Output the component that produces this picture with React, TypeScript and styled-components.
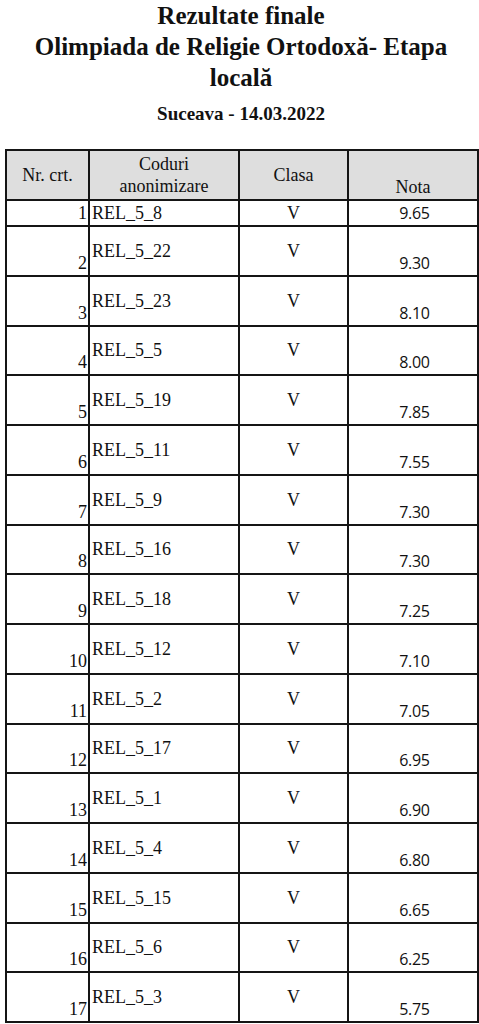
import * as React from 'react';
import styled, { createGlobalStyle } from 'styled-components';

const GlobalStyle = createGlobalStyle`
	html, body {
		margin: 0;
		padding: 0;
		background: #fff;
	}
	body {
		font-family: "Liberation Serif", "Times New Roman", serif;
		color: #111;
	}
`;

const Page = styled.div`
	width: 479px;
	padding: 0 2px 0 5px;
	box-sizing: border-box;
`;

const Title = styled.h1`
	margin: 0;
	font-size: 25px;
	line-height: 31px;
	font-weight: bold;
	text-align: center;
`;

const Subtitle = styled.h2`
	margin: 9px 0 0;
	font-size: 19px;
	line-height: 24px;
	font-weight: bold;
	text-align: center;
`;

const Table = styled.table`
	margin-top: 23px;
	width: 472px;
	border-collapse: collapse;
	table-layout: fixed;
	border: 2px solid #151515;
`;

const HeadCell = styled.th<{ $valign?: string }>`
	background: #dedede;
	border: 2px solid #151515;
	font-weight: normal;
	font-size: 18px;
	line-height: 22px;
	text-align: center;
	vertical-align: ${(p) => p.$valign || 'middle'};
	padding: 0 0 ${(p) => (p.$valign === 'bottom' ? '1px' : '0')};
`;

const Row = styled.tr<{ $tall: boolean }>`
	height: ${(p) => (p.$tall ? '49.75px' : '26px')};
`;

const Cell = styled.td`
	border: 2px solid #151515;
	padding: 0;
	font-size: 18px;
	line-height: 20px;
	white-space: nowrap;
`;

const NrCell = styled(Cell)`
	text-align: right;
	vertical-align: bottom;
	padding: 0 1px 2px 0;
`;

const CodeCell = styled(Cell)`
	text-align: left;
	vertical-align: middle;
	padding-left: 2px;
`;

const ClassCell = styled(Cell)`
	text-align: center;
	vertical-align: middle;
`;

const GradeCell = styled(Cell)`
	font-family: "Open Sans", "Noto Sans", sans-serif;
	font-size: 16px;
	letter-spacing: -0.3px;
	text-align: center;
	vertical-align: bottom;
	padding: 0 0 2px 3px;
`;

const results: [string, string][] = [
	['REL_5_8', '9.65'],
	['REL_5_22', '9.30'],
	['REL_5_23', '8.10'],
	['REL_5_5', '8.00'],
	['REL_5_19', '7.85'],
	['REL_5_11', '7.55'],
	['REL_5_9', '7.30'],
	['REL_5_16', '7.30'],
	['REL_5_18', '7.25'],
	['REL_5_12', '7.10'],
	['REL_5_2', '7.05'],
	['REL_5_17', '6.95'],
	['REL_5_1', '6.90'],
	['REL_5_4', '6.80'],
	['REL_5_15', '6.65'],
	['REL_5_6', '6.25'],
	['REL_5_3', '5.75'],
];

export default function App() {
	return (
		<Page>
			<GlobalStyle />
			<Title>
				Rezultate finale
				<br />
				Olimpiada de Religie Ortodoxă- Etapa
				<br />
				locală
			</Title>
			<Subtitle>Suceava - 14.03.2022</Subtitle>
			<Table>
				<colgroup>
					<col style={{ width: 83 }} />
					<col style={{ width: 150 }} />
					<col style={{ width: 109 }} />
					<col style={{ width: 130 }} />
				</colgroup>
				<thead>
					<tr style={{ height: 50 }}>
						<HeadCell>Nr. crt.</HeadCell>
						<HeadCell>
							Coduri
							<br />
							anonimizare
						</HeadCell>
						<HeadCell>Clasa</HeadCell>
						<HeadCell $valign="bottom">Nota</HeadCell>
					</tr>
				</thead>
				<tbody>
					{results.map(([code, grade], i) => (
						<Row key={code} $tall={i > 0}>
							<NrCell>{i + 1}</NrCell>
							<CodeCell>{code}</CodeCell>
							<ClassCell>V</ClassCell>
							<GradeCell>{grade}</GradeCell>
						</Row>
					))}
				</tbody>
			</Table>
		</Page>
	);
}
